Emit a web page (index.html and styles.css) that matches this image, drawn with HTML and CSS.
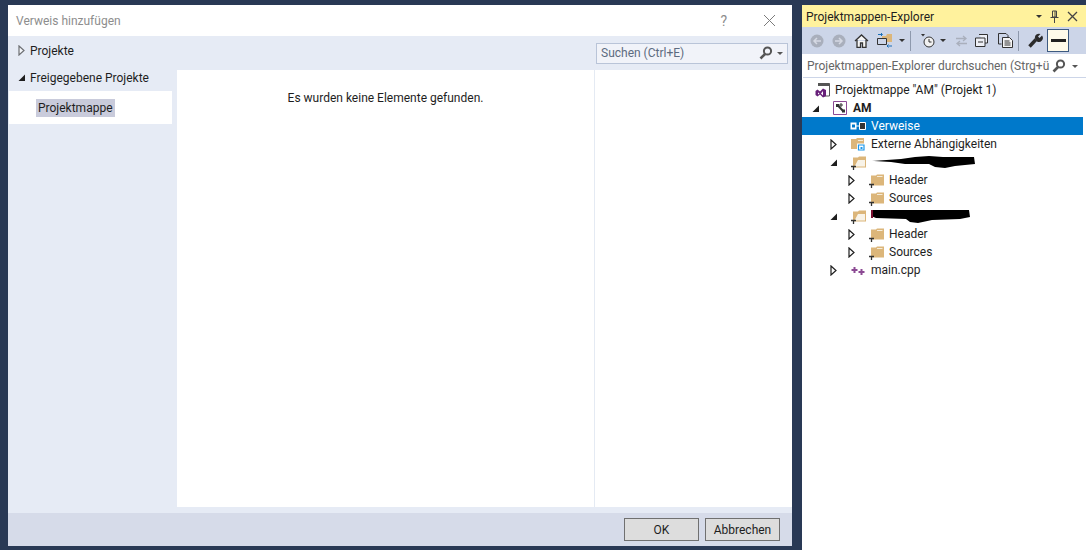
FILE: index.html
```html
<!DOCTYPE html>
<html lang="de">
<head>
    <meta charset="UTF-8" />
    <title>Verweis hinzufügen</title>
    <link rel="stylesheet" href="styles.css">
</head>
<body>
    <svg class="defs" width="0" height="0">
        <symbol id="arrow-open" viewBox="0 0 9 9"><path d="M8 1.500V8H1.500z" fill="#1e1e1e"/></symbol>
        <symbol id="arrow-closed" viewBox="0 0 9 11"><path d="M2 1l5 4.500L2 10z" fill="#fff" stroke="#1e1e1e" stroke-width="1.200"/></symbol>
        <symbol id="folder" viewBox="0 0 15 15"><path d="M2 2.500h5l1-1h7v11H2z" fill="#dcb67a"/><path d="M3.500 4h4.500v-1h5.500v1z" fill="#f6ecd9"/><path d="M0 11.500h5M2.500 11.500v3.500" stroke="#333" stroke-width="1.300" fill="none"/></symbol>
        <symbol id="folder-open" viewBox="0 0 15 15"><path d="M2 2.500h5l1-1h7v11H2z" fill="#dcb67a"/><path d="M3.500 11.500l3.500-6.500h7v6.500z" fill="#f8f3e8"/><path d="M0 11.500h5M2.500 11.500v3.500" stroke="#333" stroke-width="1.300" fill="none"/></symbol>
    </svg>

    <!-- Dialog -->
    <div class="dialog">
        <div class="dialog-title">
            <span class="dialog-name">Verweis hinzufügen</span>
            <span class="help">?</span>
            <svg class="close-x" width="13" height="13" viewBox="0 0 13 13"><path d="M1 1l11 11M12 1L1 12" stroke="#7b7b7b" stroke-width="1" fill="none"/></svg>
        </div>
        <div class="dialog-body">
            <div class="nav">
                <div class="nav-head nav-first">
                    <svg class="nav-arrow" width="9" height="11"><use href="#arrow-closed"/></svg>
                    Projekte
                </div>
                <div class="nav-head">
                    <svg class="nav-arrow" width="9" height="9"><use href="#arrow-open"/></svg>
                    Freigegebene Projekte
                </div>
                <div class="nav-list">
                    <span class="nav-item">Projektmappe</span>
                </div>
            </div>
            <div class="content">
                <div class="search-band">
                    <div class="search-box">
                        <span class="search-text">Suchen (Ctrl+E)</span>
                        <svg width="16" height="16" viewBox="0 0 16 16"><circle cx="9.500" cy="6" r="3.600" fill="none" stroke="#555" stroke-width="2"/><path d="M7 9l-4.500 4.500" stroke="#555" stroke-width="2.600"/></svg>
                        <span class="caret"></span>
                    </div>
                </div>
                <div class="results">
                    <div class="results-list">Es wurden keine Elemente gefunden.</div>
                    <div class="results-side"></div>
                </div>
            </div>
        </div>
        <div class="dialog-gap"></div>
        <div class="dialog-footer">
            <button class="btn btn-ok">OK</button>
            <button class="btn">Abbrechen</button>
        </div>
    </div>

    <!-- Solution Explorer -->
    <div class="explorer">
        <div class="explorer-title">
            <span class="explorer-name">Projektmappen-Explorer</span>
            <span class="caret caret-dark caret-title"></span>
            <svg width="11" height="13" viewBox="0 0 11 13"><path d="M3.500 1h4v6h-4zM1.500 7.500h8M5.500 8v5M6 1v6" stroke="#444" stroke-width="1" fill="none"/></svg>
            <svg width="11" height="11" viewBox="0 0 11 11"><path d="M1 1l9 9M10 1l-9 9" stroke="#444" stroke-width="1.300" fill="none"/></svg>
        </div>
        <div class="toolbar">
            <svg class="tool" width="14" height="14" viewBox="0 0 14 14"><circle cx="7" cy="7" r="6.500" fill="#a9afbc"/><path d="M11 7H4M7 4L4 7l3 3" stroke="#d5d9e3" stroke-width="1.500" fill="none"/></svg>
            <svg class="tool tool-fwd" width="14" height="14" viewBox="0 0 14 14"><circle cx="7" cy="7" r="6.500" fill="#a9afbc"/><path d="M3 7h7M7 4l3 3-3 3" stroke="#d5d9e3" stroke-width="1.500" fill="none"/></svg>
            <svg class="tool tool-home" width="15" height="14" viewBox="0 0 15 14"><path d="M1 7l6.500-6L14 7M3 6v7.500h3.500V9h2v4.500H12V6" stroke="#333" stroke-width="1.300" fill="#f5f5f5"/></svg>
            <svg class="tool tool-sync" width="16" height="15" viewBox="0 0 16 15"><path d="M0.500 5.500h9v6h-9z" fill="none" stroke="#333"/><path d="M5 3h4l1-2h5v8h-5V5H5z" fill="#dcb67a"/><path d="M1 1.500h4M4 0l1.500 1.500L4 3" stroke="#1c6fb5" fill="none"/><path d="M15 13h-5M11.500 11.500L10 13l1.500 1.500" stroke="#1c6fb5" fill="none"/></svg>
            <span class="caret caret-dark caret-tool"></span>
            <span class="tool-sep"></span>
            <svg class="tool tool-clock" width="14" height="15" viewBox="0 0 14 15"><circle cx="8" cy="9" r="5" fill="#f2f2f2" stroke="#333"/><path d="M8 6v3h2.500" stroke="#333" fill="none"/><path d="M0 1h4L2 3.500z" fill="#333"/></svg>
            <span class="caret caret-dark caret-tool2"></span>
            <svg class="tool tool-swap" width="13" height="12" viewBox="0 0 13 12"><path d="M1 3.500h10M8 1l3 2.500L8 6M12 8.500H2M5 6L2 8.500 5 11" stroke="#a9afbc" stroke-width="1.300" fill="none"/></svg>
            <svg class="tool tool-copy" width="13" height="13" viewBox="0 0 13 13"><path d="M4 .5h8.500V9H10M.5 4H10v8.500H.5z" fill="#eef0f6" stroke="#333"/><path d="M3 8h5" stroke="#333"/></svg>
            <svg class="tool tool-pages" width="15" height="15" viewBox="0 0 15 15"><path d="M.500 .500H8l2 2v2M.500 .500V11h3" fill="none" stroke="#333"/><path d="M4.500 4.500h7l3 3v7h-10z" fill="#f5f5f5" stroke="#333"/><path d="M6.500 8h5M6.500 10h6M6.500 12h6" stroke="#333"/></svg>
            <span class="tool-sep tool-sep2"></span>
            <svg class="tool tool-wrench" width="15" height="15" viewBox="0 0 15 15"><path d="M1.500 13.500L8 6.500" stroke="#2b2b2b" stroke-width="3.400"/><path d="M7 5.500A4 4 0 0 1 12.500 1L10 3.500 11.500 5 14 2.500A4 4 0 0 1 9 8.500z" fill="#2b2b2b"/></svg>
            <span class="tool-active"><span class="tool-bar"></span></span>
        </div>
        <div class="explorer-search">
            <span class="explorer-search-text">Projektmappen-Explorer durchsuchen (Strg+ü</span>
            <svg width="16" height="16" viewBox="0 0 16 16"><circle cx="9.500" cy="6" r="3.600" fill="none" stroke="#555" stroke-width="2"/><path d="M7 9l-4.500 4.500" stroke="#555" stroke-width="2.600"/></svg>
            <span class="caret caret-search"></span>
        </div>
        <div class="tree">
            <div class="row row-solution">
                <svg class="icon" width="15" height="15" viewBox="0 0 15 15"><path d="M3 .5h11.500V13H8" fill="none" stroke="#555"/><path d="M3 .5h11.500V3H3z" fill="#555"/><path d="M.5 8l2-1.500 2.500 2 3-3 3 1.500v6l-3 1.500-3-3-2.500 2-2-1.500z" fill="#68217a"/><path d="M3 9.500l1.500 1-1.500 1zM8 8l-2 2.500L8 12.500z" fill="#fff"/></svg>
                <span>Projektmappe "AM" (Projekt 1)</span>
            </div>
            <div class="row">
                <svg class="arrow" width="9" height="9"><use href="#arrow-open"/></svg>
                <svg class="icon" width="15" height="15" viewBox="0 0 15 15"><path d="M.5.500h13v13H.5z" fill="#fff" stroke="#8c4a94"/><path d="M4.500 4l6 6.500" stroke="#333" stroke-width="2"/><path d="M3 3h3v3H3zM9 8.500h3v3H9z" fill="#333"/><path d="M8 2v4M6 4h4" stroke="#333"/></svg>
                <strong>AM</strong>
            </div>
            <div class="row row-selected lvl-1">
                <span class="arrow-slot"></span>
                <svg class="icon icon-wide" width="16" height="10" viewBox="0 0 16 10"><path d="M.5 1.500h6v7h-6z" fill="#fff"/><path d="M2 3.500h3v3H2z" fill="#0079cb"/><path d="M6 4.500h4v1H6z" fill="#fff"/><path d="M9.500 1.500h6v7h-6z" fill="#333" stroke="#fff"/></svg>
                <span>Verweise</span>
            </div>
            <div class="row lvl-1">
                <svg class="arrow" width="9" height="11"><use href="#arrow-closed"/></svg>
                <svg class="icon" width="15" height="15" viewBox="0 0 15 15"><path d="M0 2h5l1-1h7v11H0z" fill="#dcb67a"/><path d="M2 4h5V3h5v1z" fill="#f6ecd9"/><path d="M6 6.500h8.500v8H6z" fill="#fff"/><path d="M7.500 8h5.500v5H7.500z" fill="none" stroke="#1c97ea" stroke-width="1.200"/><path d="M9.500 10h2v2h-2z" fill="#1c97ea"/></svg>
                <span>Externe Abhängigkeiten</span>
            </div>
            <div class="row lvl-1">
                <svg class="arrow" width="9" height="9"><use href="#arrow-open"/></svg>
                <svg class="icon" width="15" height="15"><use href="#folder-open"/></svg>
                <svg class="redact" width="104" height="12" viewBox="0 0 104 12"><path d="M1 5l29-2 14-2 14-1 14 1 31 0 1 7-20 2-10 2-10-1-6-3-24 0-14-2-17-1z" fill="#000"/></svg>
            </div>
            <div class="row lvl-2">
                <svg class="arrow" width="9" height="11"><use href="#arrow-closed"/></svg>
                <svg class="icon" width="15" height="15"><use href="#folder"/></svg>
                <span>Header</span>
            </div>
            <div class="row lvl-2">
                <svg class="arrow" width="9" height="11"><use href="#arrow-closed"/></svg>
                <svg class="icon" width="15" height="15"><use href="#folder"/></svg>
                <span>Sources</span>
            </div>
            <div class="row lvl-1">
                <svg class="arrow" width="9" height="9"><use href="#arrow-open"/></svg>
                <svg class="icon" width="15" height="15"><use href="#folder-open"/></svg>
                <svg class="redact" width="100" height="14" viewBox="0 0 100 14"><path d="M0 1H98l1 7-10 2-28 1-14 3-8-1-4-3-30-1-5-2z" fill="#000"/><path d="M0 1h2v8H0z" fill="#7a1030"/></svg>
            </div>
            <div class="row lvl-2">
                <svg class="arrow" width="9" height="11"><use href="#arrow-closed"/></svg>
                <svg class="icon" width="15" height="15"><use href="#folder"/></svg>
                <span>Header</span>
            </div>
            <div class="row lvl-2">
                <svg class="arrow" width="9" height="11"><use href="#arrow-closed"/></svg>
                <svg class="icon" width="15" height="15"><use href="#folder"/></svg>
                <span>Sources</span>
            </div>
            <div class="row lvl-1">
                <svg class="arrow" width="9" height="11"><use href="#arrow-closed"/></svg>
                <svg class="icon" width="15" height="15" viewBox="0 0 15 15"><path d="M3.500 4v6M.5 7h6M10.500 6v6M7.500 9h6" stroke="#8c4a94" stroke-width="2" fill="none"/></svg>
                <span>main.cpp</span>
            </div>
        </div>
    </div>
</body>
</html>
```

FILE: styles.css
```css
html, body {
    height: 100%;
}

body {
    margin: 0;
    height: 550px;
    overflow: hidden;
    box-sizing: border-box;
    padding: 5px 0 4px 8px;
    display: flex;
    background-color: #293955;
    font-family: 'Roboto', sans-serif;
    font-size: 12px;
    color: #1e1e1e;
}

.defs {
    position: absolute;
}

/* Dialog */
.dialog {
    width: 784px;
    flex: none;
    margin-right: 10px;
    display: flex;
    flex-direction: column;
    background-color: #e6ebf5;
}

.dialog-title {
    height: 31px;
    display: flex;
    align-items: center;
    padding: 0 16px 0 8px;
    background-color: #fff;
}

.dialog-name {
    flex: 1;
    color: #8d8d8d;
}

.help {
    margin-right: 36px;
    color: #8d8d8d;
    font-size: 14px;
}

.dialog-body {
    flex: 1;
    display: flex;
    min-height: 0;
}

.nav {
    width: 169px;
    flex: none;
}

.nav-head {
    height: 27px;
    display: flex;
    align-items: center;
    padding-left: 9px;
    gap: 4px;
}

.nav-first {
    margin-top: 1px;
}

.nav-first svg {
    opacity: 0.6;
}

.nav-list {
    margin-left: 1px;
    margin-right: 5px;
    height: 33px;
    display: flex;
    align-items: center;
    padding-left: 27px;
    background-color: #fff;
}

.nav-item {
    padding: 2px 2px;
    background-color: #c9cbdb;
}

.content {
    flex: 1;
    display: flex;
    flex-direction: column;
    min-width: 0;
}

.search-band {
    height: 34px;
    display: flex;
    align-items: center;
    justify-content: flex-end;
    padding-right: 4px;
}

.search-box {
    box-sizing: border-box;
    width: 192px;
    height: 21px;
    display: flex;
    align-items: center;
    padding: 0 2px 0 4px;
    border: 1px solid #b9c4d8;
    background-color: #f1f3f9;
}

.search-text {
    flex: 1;
    color: #5d6b80;
}

.caret {
    width: 0;
    height: 0;
    margin: 0 2px 0 3px;
    border-left: 3px solid transparent;
    border-right: 3px solid transparent;
    border-top: 3px solid #555;
}

.caret-dark {
    border-top-color: #333;
}

.caret-title {
    margin-right: 0;
}

.caret-search {
    margin-left: 5px;
}

.results {
    flex: 1;
    display: flex;
    background-color: #fff;
}

.results-list {
    width: 417px;
    padding-top: 21px;
    text-align: center;
    border-right: 1px solid #e4eaf3;
}

.dialog-gap {
    height: 6px;
}

.dialog-footer {
    height: 33px;
    display: flex;
    align-items: center;
    justify-content: flex-end;
    gap: 6px;
    padding-right: 12px;
    background-color: #d6dbe9;
}

.btn {
    width: 75px;
    height: 23px;
    padding: 0;
    border: 1px solid #707070;
    background-color: #dddddd;
    font: inherit;
    color: #1e1e1e;
}

/* Explorer */
.explorer {
    flex: 1;
    display: flex;
    flex-direction: column;
    background-color: #fff;
    margin-bottom: -4px;
}

.explorer-title {
    height: 22px;
    display: flex;
    align-items: center;
    padding: 0 8px 0 4px;
    gap: 7px;
    background-color: #fff29d;
}

.explorer-name {
    flex: 1;
    padding-top: 2px;
}

.toolbar {
    height: 27px;
    display: flex;
    align-items: center;
    padding-left: 8px;
    background-color: #ccd5e8;
}

.tool-fwd,
.tool-home,
.tool-sync {
    margin-left: 8px;
}

.caret-tool {
    margin-left: 6px;
}

.caret-tool2 {
    margin-left: 5px;
}

.tool-sep {
    width: 1px;
    height: 20px;
    margin: 0 10px 0 3px;
    background-color: #8e99ad;
}

.tool-swap {
    margin-left: 7px;
}

.tool-copy {
    margin-left: 7px;
}

.tool-pages {
    margin-left: 10px;
}

.tool-sep2 {
    margin: 0 9px 0 5px;
}

.tool-active {
    width: 20px;
    height: 21px;
    margin-left: 4px;
    display: flex;
    align-items: center;
    justify-content: center;
    border: 1px solid #3d5a80;
    background-color: #fffbea;
}

.tool-bar {
    width: 15px;
    height: 3px;
    background-color: #222;
}

.explorer-search {
    height: 22px;
    margin: 1px 0 0 1px;
    display: flex;
    align-items: center;
    padding: 0 6px 0 4px;
    background-color: #fff;
    border-bottom: 1px solid #ccd5e8;
}

.explorer-search-text {
    flex: 1;
    color: #666;
    white-space: nowrap;
    overflow: hidden;
}

.tree {
    padding-top: 3px;
}

.row {
    height: 18px;
    display: flex;
    align-items: center;
    padding-left: 4px;
    margin-right: 3px;
}

.row-solution {
    padding-left: 13px;
}

.lvl-1 {
    padding-left: 22px;
}

.lvl-2 {
    padding-left: 40px;
}

.arrow,
.arrow-slot {
    width: 9px;
    margin: 0 13px 0 5px;
    flex: none;
}

.arrow-slot {
    height: 1px;
}

.icon {
    margin-right: 5px;
    flex: none;
}

.icon-wide {
    margin-left: -1px;
}

.row-selected {
    background-color: #0079cb;
    color: #fff;
}
```
